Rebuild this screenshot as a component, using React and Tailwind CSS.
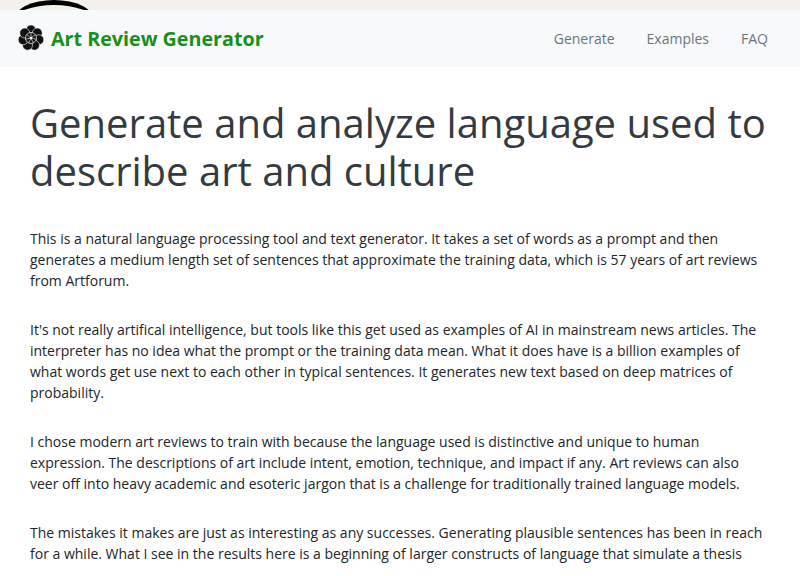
export default function App() {
  const p = [
    "This is a natural language processing tool and text generator. It takes a set of words as a prompt and then generates a medium length set of sentences that approximate the training data, which is 57 years of art reviews from Artforum.",
    "It's not really artifical intelligence, but tools like this get used as examples of AI in mainstream news articles. The interpreter has no idea what the prompt or the training data mean. What it does have is a billion examples of what words get use next to each other in typical sentences. It generates new text based on deep matrices of probability.",
    "I chose modern art reviews to train with because the language used is distinctive and unique to human expression. The descriptions of art include intent, emotion, technique, and impact if any. Art reviews can also veer off into heavy academic and esoteric jargon that is a challenge for traditionally trained language models.",
    "The mistakes it makes are just as interesting as any successes. Generating plausible sentences has been in reach for a while. What I see in the results here is a beginning of larger constructs of language that simulate a thesis",
  ];
  return (
    <div className="w-[800px] h-[576px] overflow-hidden bg-white" style={{ fontFamily: '"Open Sans", sans-serif' }}>
      <div className="relative h-[10px] bg-[#f4f0ea] overflow-hidden">
        <div className="absolute left-[14px] top-[0px] w-[80px] h-[40px] rounded-[50%] border-t-[5px] border-black" />
      </div>
      <nav className="h-[57px] bg-[#f8f9fa] flex items-center justify-between px-[18px]">
        <div className="flex items-center gap-[7px]">
          <svg width="26" height="26" viewBox="0 0 26 26">
            {[0, 1, 2, 3, 4, 5, 6].map((i) => {
              const a = (i * 2 * Math.PI) / 7 - Math.PI / 2;
              return <circle key={i} cx={13 + 8 * Math.cos(a)} cy={13 + 8 * Math.sin(a)} r="5" fill="#111" stroke="#fff" strokeWidth="0.6" />;
            })}
            <circle cx="13" cy="13" r="5.5" fill="#111" stroke="#fff" strokeWidth="0.7" />
            {[0, 1, 2, 3, 4, 5, 6].map((i) => {
              const a = (i * 2 * Math.PI) / 7 - Math.PI / 2;
              return <line key={i} x1="13" y1="13" x2={13 + 5.5 * Math.cos(a)} y2={13 + 5.5 * Math.sin(a)} stroke="#fff" strokeWidth="0.6" />;
            })}
            <circle cx="13" cy="13" r="1.3" fill="#fff" />
          </svg>
          <span className="text-[19.7px] font-bold text-[#189018]">Art Review Generator</span>
        </div>
        <div className="flex gap-[32px] text-[14px] text-[#6c757d] pr-[14px]">
          <span>Generate</span>
          <span>Examples</span>
          <span>FAQ</span>
        </div>
      </nav>
      <main className="px-[30px] pt-[32px]">
        <h1 className="text-[40px] font-normal leading-[48px] text-[#343a40] mb-[33px]">
          Generate and analyze language used to describe art and culture
        </h1>
        {p.map((t, i) => (
          <p key={i} className="text-[14px] leading-[21px] text-[#212529] mb-[28px] pr-[4px]">{t}</p>
        ))}
      </main>
    </div>
  );
}
